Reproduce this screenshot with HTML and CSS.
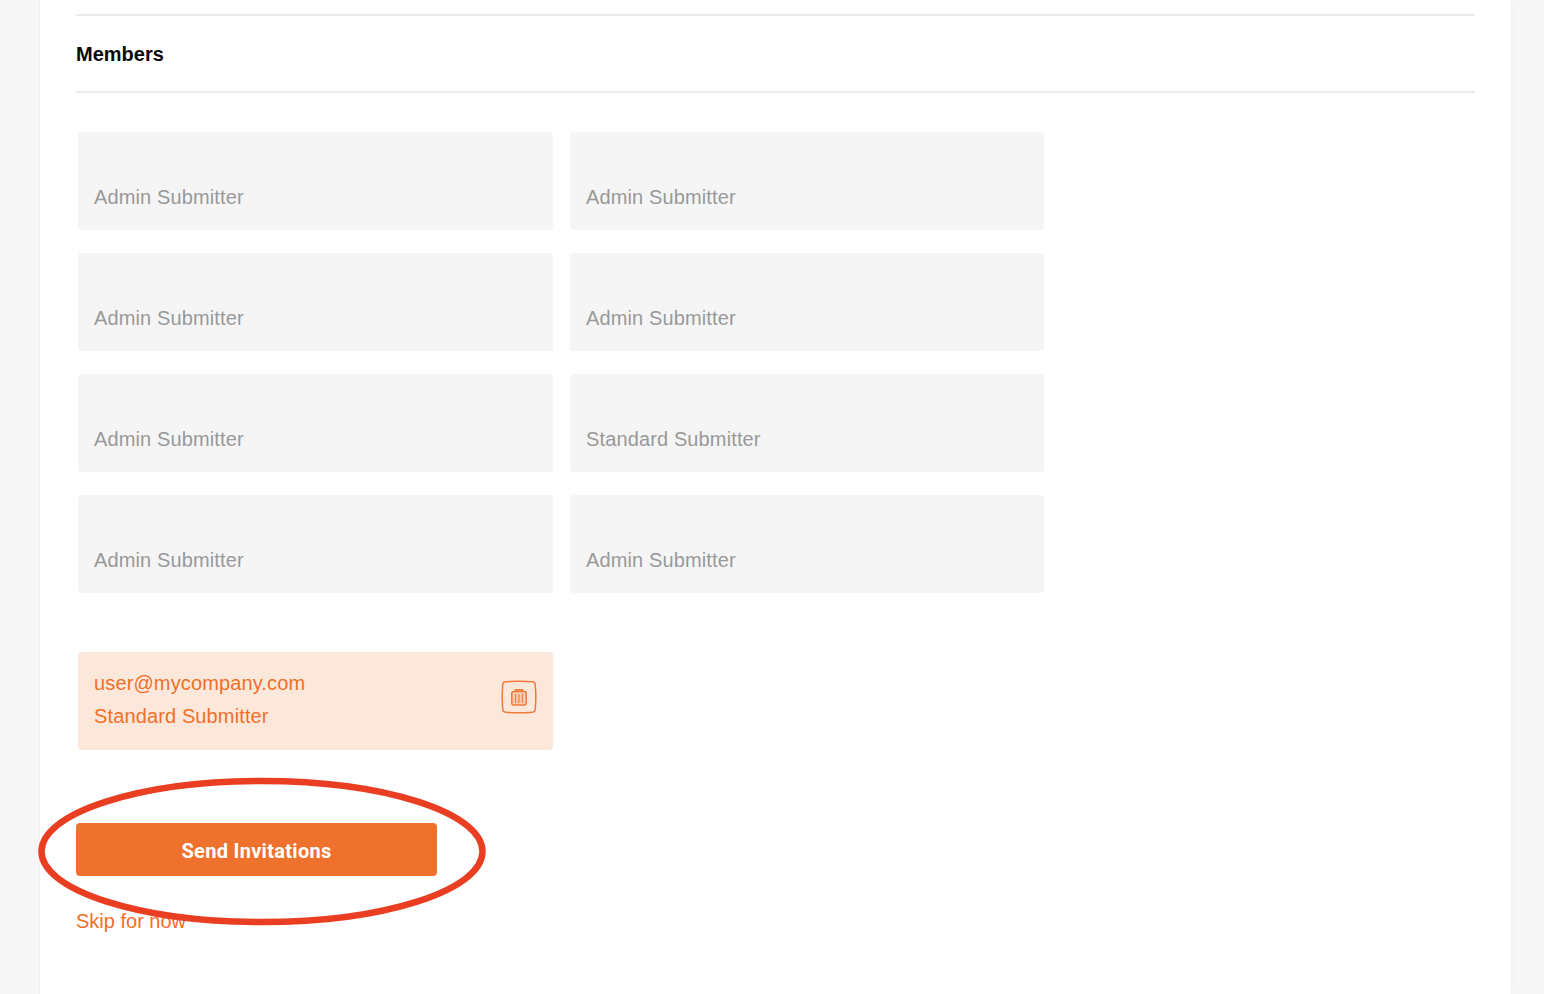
FILE: index.html
```html
<!DOCTYPE html>
<html lang="en">
<head>
<meta charset="utf-8">
<title>Members</title>
<link rel="stylesheet" href="styles.css">
</head>
<body>
<main class="panel">
  <section class="section-head">
    <h2 class="section-title">Members</h2>
  </section>
  <div class="member-grid">
    <div class="member-card"><span class="role">Admin Submitter</span></div>
    <div class="member-card"><span class="role">Admin Submitter</span></div>
    <div class="member-card"><span class="role">Admin Submitter</span></div>
    <div class="member-card"><span class="role">Admin Submitter</span></div>
    <div class="member-card"><span class="role">Admin Submitter</span></div>
    <div class="member-card"><span class="role">Standard Submitter</span></div>
    <div class="member-card"><span class="role">Admin Submitter</span></div>
    <div class="member-card"><span class="role">Admin Submitter</span></div>
  </div>
  <div class="invite-card">
    <div class="invite-text">
      <span>user@mycompany.com</span>
      <span>Standard Submitter</span>
    </div>
    <button class="delete-btn" type="button" aria-label="Delete">
      <svg width="36" height="34" viewBox="0 0 36 34" fill="none" stroke="#f07a3c">
        <path d="M4.5 1.8 Q18 0.6 31.5 1.8 Q34 2 34.2 4.5 Q35.4 17 34.2 29.5 Q34 32 31.5 32.2 Q18 33.4 4.5 32.2 Q2 32 1.8 29.5 Q0.6 17 1.8 4.5 Q2 2 4.5 1.8 Z" stroke-width="1.5"/>
        <path d="M14.5 11.5 V9.7 H21.5 V11.5" stroke-width="1.5" fill="#f5b48e"/>
        <rect x="10.8" y="11.5" width="14.4" height="13.5" rx="1.6" stroke-width="1.5" fill="#f7cdb2"/>
        <path d="M14.6 14 V23 M18 14 V23 M21.4 14 V23" stroke-width="1.1"/>
      </svg>
    </button>
  </div>
  <div class="actions">
    <button class="send-btn" type="button">Send Invitations</button>
    <a class="skip-link" href="#">Skip for now</a>
    <svg class="highlight" width="452" height="152" viewBox="0 0 452 152" fill="none" aria-hidden="true">
      <ellipse cx="224" cy="75.5" rx="220.5" ry="70.5" stroke="#e93e22" stroke-width="6.5"/>
    </svg>
  </div>
</main>
</body>
</html>
```
FILE: styles.css
```css
* {
  box-sizing: border-box;
}

html,
body {
  height: 100%;
}

body {
  margin: 0;
  background: #f7f7f7;
  font-family: "Liberation Sans", Arial, sans-serif;
  overflow: hidden;
}

.panel {
  width: 1473px;
  height: 994px;
  margin-left: 39px;
  padding: 14px 36px 0 36px;
  background: #fff;
  border-left: 1px solid #efefef;
  border-right: 1px solid #efefef;
  box-shadow: 0 0 10px rgba(0, 0, 0, 0.02);
}

.section-head {
  height: 79px;
  border-top: 2px solid #ebebeb;
  border-bottom: 2px solid #ebebeb;
  display: flex;
  align-items: center;
}

.section-title {
  margin: 1px 0 0;
  font-size: 20px;
  font-weight: 700;
  line-height: 24px;
  color: #0a0a0a;
}

.member-grid {
  display: grid;
  grid-template-columns: 475px 474px;
  grid-auto-rows: 98px;
  column-gap: 17px;
  row-gap: 23px;
  margin: 39px 0 0 2px;
}

.member-card {
  display: flex;
  align-items: flex-end;
  padding: 0 16px 21px;
  background: #f5f5f5;
  border-radius: 4px;
}

.role {
  font-size: 20px;
  letter-spacing: 0.13px;
  line-height: 24px;
  color: #999;
}

.invite-card {
  display: flex;
  align-items: center;
  justify-content: space-between;
  width: 475px;
  height: 98px;
  margin: 59px 0 0 2px;
  padding: 0 16px 0 16px;
  background: #fce8db;
  border-radius: 4px;
}

.invite-text {
  display: flex;
  flex-direction: column;
  gap: 9px;
  margin-bottom: 3px;
  font-size: 20px;
  letter-spacing: 0.13px;
  line-height: 24px;
  color: #f26f27;
}

.delete-btn {
  display: flex;
  width: 36px;
  height: 34px;
  margin-bottom: 8px;
  padding: 0;
  background: none;
  border: 0;
}

.actions {
  position: relative;
  display: flex;
  flex-direction: column;
  align-items: flex-start;
  margin-top: 73px;
}

.send-btn {
  width: 361px;
  height: 53px;
  padding: 2px 0 0;
  background: #ef712e;
  border: 0;
  border-radius: 4px;
  color: #fff;
  font-family: Roboto, "Liberation Sans", sans-serif;
  font-size: 20px;
  font-weight: 700;
  letter-spacing: 0.3px;
}

.skip-link {
  margin-top: 33px;
  font-size: 20px;
  line-height: 24px;
  color: #f26f27;
  text-decoration: none;
}

.highlight {
  position: absolute;
  left: -38px;
  top: -47px;
  overflow: visible;
}
```
